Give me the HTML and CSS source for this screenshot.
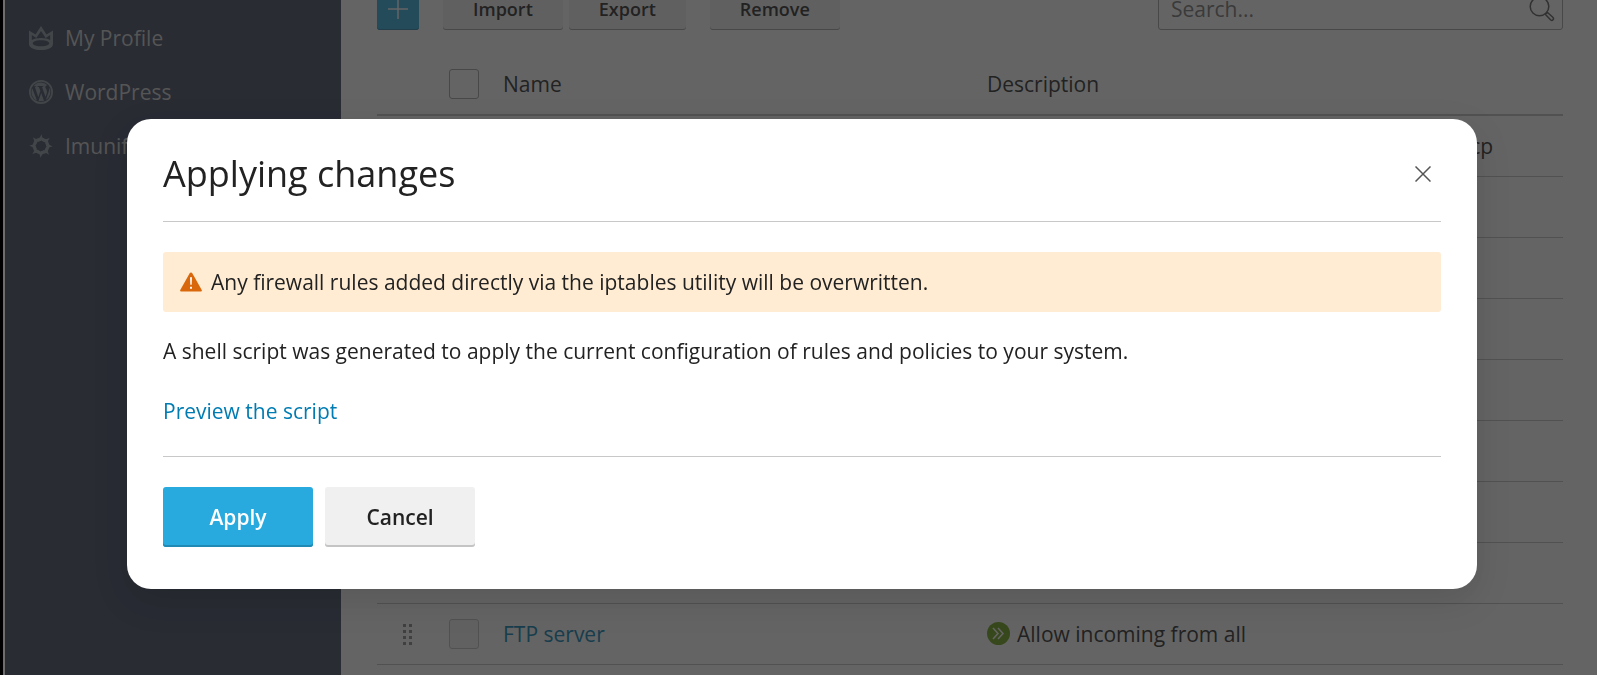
FILE: index.html
```html
<!DOCTYPE html>
<html lang="en">
<head>
    <meta charset="UTF-8">
    <meta name="viewport" content="width=device-width, initial-scale=1.0">
    <title>Firewall</title>
    <link rel="stylesheet" href="styles.css">
</head>
<body>
    <div class="page">
        <nav class="sidebar">
            <a class="nav-item" href="#">
                <svg class="nav-icon" viewBox="0 0 24 24" fill="currentColor" fill-rule="evenodd">
                    <path d="M0 4.500L6.500 8.500L12 0L17.500 8.500L24 4.500V18C24 26 0 26 0 18ZM2.800 9V14C6 11.300 18 11.300 21.200 14V9L16.700 12L12 5L7.300 12ZM12 14.200C1 14.200 1 20.300 12 20.300C23 20.300 23 14.200 12 14.200Z"/>
                </svg>
                My Profile
            </a>
            <a class="nav-item" href="#">
                <svg class="nav-icon" viewBox="0 0 24 24" fill="currentColor">
                    <path d="M12 0a12 12 0 1 0 0 24a12 12 0 0 0 0-24zM12 1.800a10.200 10.200 0 1 1 0 20.400a10.200 10.200 0 0 1 0-20.400z" fill-rule="evenodd"/>
                    <path d="M3.300 8.200L8 20.700A9.400 9.400 0 0 1 3.300 8.200zM4.600 6.200A9.400 9.400 0 0 1 18.500 5.200C16.600 5.200 16 6.600 16.600 8C17.600 9.700 18.300 11 17.700 13.300L16.600 17L13 6.900L14.200 6.700V6H8.500V6.700L9.900 6.900L11.400 11L9.300 17.200L5.900 6.900L7.200 6.700V6.200zM12.200 13L15 20.800A9.400 9.400 0 0 1 9.500 21zM20.300 7.600A9.400 9.400 0 0 1 16.800 20L19.500 12.200C20.200 10.500 20.400 9 20.300 7.600z"/>
                </svg>
                WordPress
            </a>
            <a class="nav-item" href="#">
                <svg class="nav-icon" viewBox="0 0 24 24" fill="currentColor">
                    <g id="ray">
                        <path id="blade" d="M8.500 8L12.500 0.300L13.300 3.500L17.500 5.500L16 8.500L12 6.200Z"/>
                        <use href="#blade" transform="rotate(45 12 12)"/>
                    </g>
                    <use href="#ray" transform="rotate(90 12 12)"/>
                    <use href="#ray" transform="rotate(180 12 12)"/>
                    <use href="#ray" transform="rotate(270 12 12)"/>
                </svg>
                Imunify
            </a>
        </nav>

        <main class="content">
            <div class="toolbar">
                <button class="tool-btn tool-add" aria-label="Add rule">
                    <svg width="20" height="20" viewBox="0 0 20 20" stroke="currentColor" stroke-width="1.500"><path d="M10 0V20M0 10H20"/></svg>
                </button>
                <button class="tool-btn">Import</button>
                <button class="tool-btn">Export</button>
                <button class="tool-btn tool-remove">Remove</button>
                <div class="search">
                    <input type="text" placeholder="Search..." aria-label="Search">
                    <svg class="search-icon" viewBox="0 0 26 26" fill="none" stroke="currentColor" stroke-width="1.500">
                        <circle cx="10.500" cy="10.500" r="9.300"/>
                        <path d="M16.500 18.500L18.500 16.500L23.800 21.300C25.500 23 23.500 25.500 21.500 23.800Z"/>
                    </svg>
                </div>
            </div>

            <table class="rules">
                <colgroup>
                    <col class="col-drag">
                    <col class="col-check">
                    <col class="col-name">
                    <col>
                </colgroup>
                <thead>
                    <tr>
                        <th></th>
                        <th><input type="checkbox" aria-label="Select all"></th>
                        <th>Name</th>
                        <th>Description</th>
                    </tr>
                </thead>
                <tbody>
                    <tr><td></td><td></td><td></td><td><span class="allow"></span>Allow incoming from all on ports 8443/tcp 80/tcp</td></tr>
                    <tr><td colspan="4"></td></tr>
                    <tr><td colspan="4"></td></tr>
                    <tr><td colspan="4"></td></tr>
                    <tr><td colspan="4"></td></tr>
                    <tr><td colspan="4"></td></tr>
                    <tr><td colspan="4"></td></tr>
                    <tr><td colspan="4"></td></tr>
                    <tr>
                        <td class="drag">
                            <svg width="9" height="21" viewBox="0 0 9 21" fill="currentColor"><path d="M0 0h3v3h-3zM6 0h3v3h-3zM0 6h3v3h-3zM6 6h3v3h-3zM0 12h3v3h-3zM6 12h3v3h-3zM0 18h3v3h-3zM6 18h3v3h-3z"/></svg>
                        </td>
                        <td><input type="checkbox" aria-label="Select FTP server" disabled></td>
                        <td><a href="#">FTP server</a></td>
                        <td>
                            <svg class="allow" viewBox="0 0 23 23" fill="none"><circle cx="11.500" cy="11.500" r="11.500" fill="#6da012"/><path d="M6 6L11 11.500L6 17M11 6L16 11.500L11 17" stroke="#fff" stroke-width="1.500"/></svg>Allow incoming from all
                        </td>
                    </tr>
                </tbody>
            </table>
        </main>
    </div>

    <div class="overlay">
        <div class="dialog" role="dialog" aria-labelledby="dialog-title">
            <div class="dialog-header">
                <h1 id="dialog-title">Applying changes</h1>
                <button class="close" aria-label="Close">
                    <svg width="16" height="16" viewBox="0 0 16 16" stroke="currentColor" stroke-width="1.500"><path d="M0.500 0.500L15.500 15.500M15.500 0.500L0.500 15.500"/></svg>
                </button>
            </div>
            <div class="warning">
                <svg width="22" height="20" viewBox="0 0 23 20"><path d="M11.500 0C12.200 0 12.600 0.300 13 1L22.600 18C23.200 19.200 22.800 20 21.500 20H1.500C0.200 20 -0.200 19.200 0.400 18L10 1C10.400 0.300 10.800 0 11.500 0Z" fill="#d9680c"/><path d="M10.500 5h2l-0.300 8h-1.400zM10.500 15h2v2h-2z" fill="#fff"/></svg>
                Any firewall rules added directly via the iptables utility will be overwritten.
            </div>
            <p>A shell script was generated to apply the current configuration of rules and policies to your system.</p>
            <a class="preview" href="#">Preview the script</a>
            <div class="dialog-footer">
                <button class="btn btn-primary">Apply</button>
                <button class="btn">Cancel</button>
            </div>
        </div>
    </div>
</body>
</html>
```
FILE: styles.css
```css
* {
    box-sizing: border-box;
}
body {
    margin: 0;
    height: 100vh;
    overflow: hidden;
    border-left: 3px solid #000;
    background: #fff;
    color: #222;
    font-family: "Open Sans", sans-serif;
    font-size: 21px;
    line-height: 30px;
}
button,
input {
    font-family: inherit;
    font-size: inherit;
    color: inherit;
}
a {
    color: #007cb2;
    text-decoration: none;
}
.page {
    display: flex;
    min-height: 100vh;
    border-left: 2px solid #6e6e6e;
}

/* sidebar */
.sidebar {
    flex: none;
    width: 336px;
    padding-top: 11px;
    background: #39435d;
}
.nav-item {
    display: flex;
    align-items: center;
    gap: 12px;
    height: 54px;
    padding-left: 24px;
    color: #ccc;
}
.nav-icon {
    width: 24px;
    height: 24px;
    color: #8f9ba1;
}

/* content, scrolled a little under the top edge */
.content {
    flex: 1;
    margin-top: -12px;
    padding: 0 34px 0 36px;
}
.toolbar {
    display: flex;
    gap: 6px;
}
.tool-btn {
    height: 42px;
    padding: 0 30px;
    border: 0;
    border-radius: 3px;
    background: #f0f0f0;
    box-shadow: inset 0 -1px 0 #a0a0a0;
    font-size: 18px;
    font-weight: 600;
}
.tool-add {
    display: flex;
    align-items: center;
    justify-content: center;
    width: 42px;
    margin-right: 18px;
    padding: 0;
    background: #28aade;
    box-shadow: inset 0 -1px 0 #1e80a8;
    color: #fff;
}
.tool-remove {
    margin-left: 18px;
}
.search {
    position: relative;
    width: 405px;
    margin-left: auto;
}
.search input {
    width: 100%;
    height: 42px;
    padding: 0 48px 0 12px;
    border: 1px solid #a0a0a0;
    border-radius: 3px;
    background: #fff;
}
.search input::placeholder {
    color: #737373;
    opacity: 1;
}
.search-icon {
    position: absolute;
    right: 8px;
    top: 8px;
    width: 26px;
    height: 26px;
    color: #555;
}

/* rules table */
.rules {
    width: 100%;
    margin-top: 24px;
    border-collapse: separate;
    border-spacing: 0;
    table-layout: fixed;
}
.col-drag {
    width: 60px;
}
.col-check {
    width: 54px;
}
.col-name {
    width: 484px;
}
.rules th,
.rules td {
    height: 61px;
    padding: 0 12px;
    border-bottom: 1px solid #c0c0c0;
    font-weight: 400;
    text-align: left;
    white-space: nowrap;
}
.rules th {
    height: 62px;
    border-bottom: 2px solid #c0c0c0;
}
.rules .drag {
    padding: 0;
    color: #888;
    text-align: center;
}
.drag svg {
    display: block;
    margin: 0 auto;
}
.rules input {
    display: block;
    appearance: none;
    width: 30px;
    height: 30px;
    margin: 0;
    border: 1px solid #a0a0a0;
    border-radius: 3px;
    background: #fff;
}
.rules input:disabled {
    background: #f5f5f5;
    border-color: #c0c0c0;
}
.allow {
    display: inline-block;
    width: 23px;
    height: 23px;
    margin-right: 7px;
    vertical-align: -3px;
}

/* dialog */
.overlay {
    position: fixed;
    inset: 0 0 0 5px;
    padding: 119px 120px 0 122px;
    background: rgba(34, 34, 34, 0.7);
}
.dialog {
    padding: 31px 36px 42px;
    border-radius: 24px;
    background: #fff;
    box-shadow: 0 12px 36px rgba(0, 0, 0, 0.12);
}
.dialog-header {
    display: flex;
    align-items: center;
    justify-content: space-between;
    padding-bottom: 23px;
    border-bottom: 1px solid #c8c8c8;
}
.dialog h1 {
    margin: 0;
    font-size: 36px;
    font-weight: 400;
    line-height: 48px;
}
.close {
    display: flex;
    padding: 10px;
    border: 0;
    background: none;
    color: #555;
}
.warning {
    display: flex;
    align-items: center;
    gap: 9px;
    margin-top: 30px;
    padding: 15px 17px;
    border-radius: 3px;
    background: #ffecd3;
}
.dialog p {
    margin: 24px 0 30px;
}
.preview {
    display: inline-block;
}
.dialog-footer {
    display: flex;
    gap: 12px;
    margin-top: 30px;
    padding-top: 30px;
    border-top: 1px solid #c8c8c8;
}
.btn {
    width: 150px;
    height: 60px;
    border: 0;
    border-radius: 3px;
    background: #f0f0f0;
    box-shadow: inset 0 -2px 0 #c4c4c4;
    font-weight: 600;
}
.btn-primary {
    background: #28aade;
    box-shadow: inset 0 -2px 0 #2089b4;
    color: #fff;
}
```
